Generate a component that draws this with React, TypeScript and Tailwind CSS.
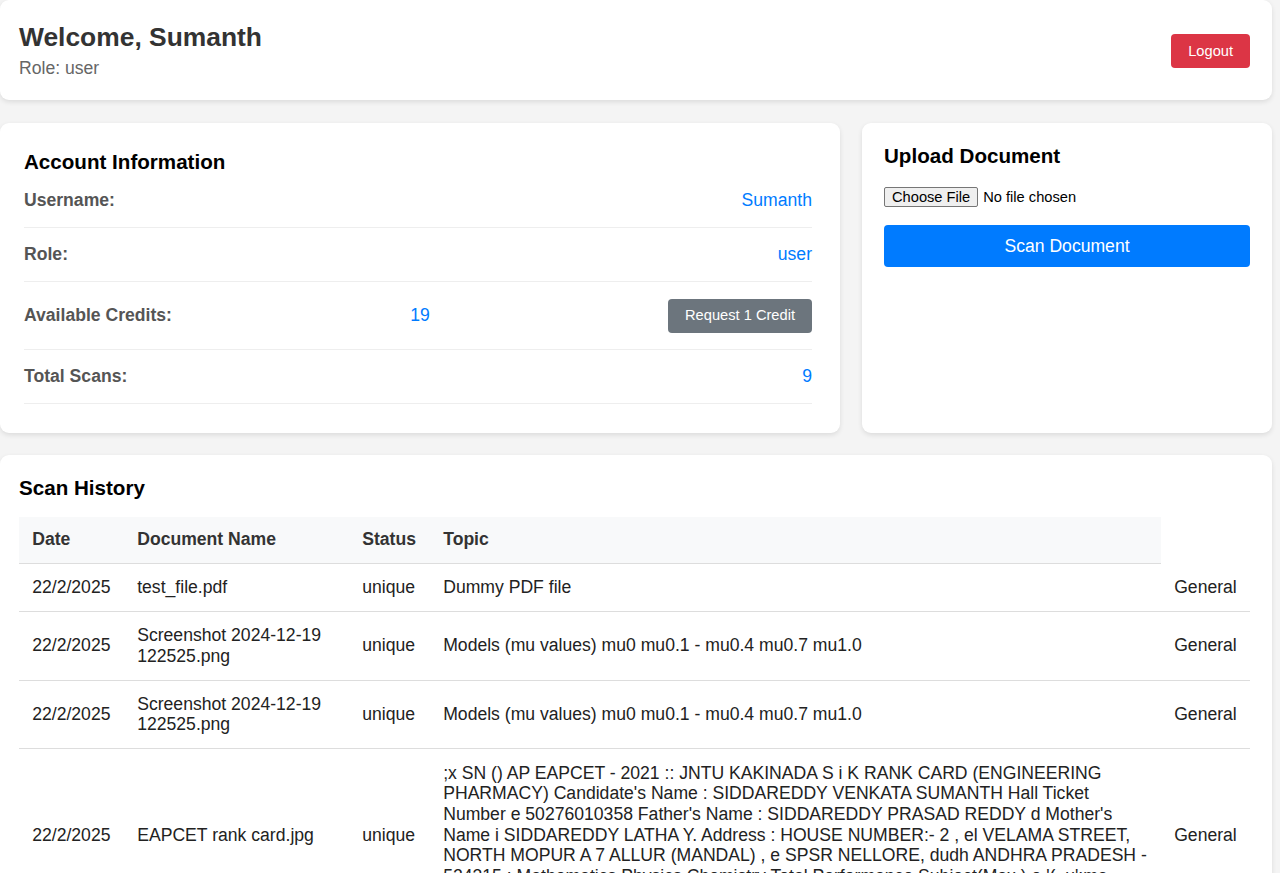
import React from "react";

const longText =
  ";x SN () AP EAPCET - 2021 :: JNTU KAKINADA S i K RANK CARD (ENGINEERING PHARMACY) Candidate's Name : SIDDAREDDY VENKATA SUMANTH Hall Ticket Number e 50276010358 Father's Name : SIDDAREDDY PRASAD REDDY d Mother's Name i SIDDAREDDY LATHA Y. Address : HOUSE NUMBER:- 2 , el VELAMA STREET, NORTH MOPUR A 7 ALLUR (MANDAL) , e SPSR NELLORE, dudh ANDHRA PRADESH - 524315 : Mathematics Physics Chemistry Total Performance Subject(Max.) e '(«u':ma Marks Secured 52.25 31.11 30.42 113.78 Rank 29457";

const rows = [
  { date: "22/2/2025", name: "test_file.pdf", status: "unique", topic: "Dummy PDF file", cat: "General" },
  { date: "22/2/2025", name: "Screenshot 2024-12-19 122525.png", status: "unique", topic: "Models (mu values) mu0 mu0.1 - mu0.4 mu0.7 mu1.0", cat: "General" },
  { date: "22/2/2025", name: "Screenshot 2024-12-19 122525.png", status: "unique", topic: "Models (mu values) mu0 mu0.1 - mu0.4 mu0.7 mu1.0", cat: "General" },
  { date: "22/2/2025", name: "EAPCET rank card.jpg", status: "unique", topic: longText, cat: "General" },
];

export default function App() {
  return (
    <div
      className="min-h-[873px] bg-[#f4f4f4] pr-[8px] text-[17.6px] text-[#333]"
      style={{ fontFamily: '"Liberation Sans", Arial, sans-serif' }}
    >
      {/* Header */}
      <div className="flex items-center justify-between rounded-[9px] bg-white pl-[19px] pr-[22px] pt-[22px] pb-[21px] shadow-[0_2px_5px_rgba(0,0,0,0.1)]">
        <div>
          <h1 className="text-[26.4px] font-bold leading-[30px] text-[#333]">Welcome, Sumanth</h1>
          <p className="mt-[6px] leading-[21px] text-[#666]">Role: user</p>
        </div>
        <button className="h-[34px] rounded-[4px] bg-[#dc3545] px-[17px] text-[14.67px] text-white">Logout</button>
      </div>

      {/* Middle row */}
      <div className="mt-[23px] flex gap-[22px]">
        <div className="w-[840px] h-[310px] rounded-[9px] bg-white pl-[24px] pr-[28px] pt-[27px] shadow-[0_2px_5px_rgba(0,0,0,0.1)]">
          <h3 className="text-[20.6px] font-bold leading-[24px] text-black">Account Information</h3>
          <div className="flex items-center justify-between border-b border-[#eee] py-[16px] leading-[21px]">
            <span className="font-bold text-[#555]">Username:</span>
            <span className="text-[#007bff]">Sumanth</span>
          </div>
          <div className="flex items-center justify-between border-b border-[#eee] py-[16px] leading-[21px]">
            <span className="font-bold text-[#555]">Role:</span>
            <span className="text-[#007bff]">user</span>
          </div>
          <div className="flex items-center justify-between border-b border-[#eee] py-[16.5px] leading-[21px]">
            <span className="font-bold text-[#555]">Available Credits:</span>
            <span className="text-[#007bff]">19</span>
            <button className="h-[34px] rounded-[4px] bg-[#6c757d] px-[17px] text-[14.67px] text-white">Request 1 Credit</button>
          </div>
          <div className="flex items-center justify-between border-b border-[#eee] py-[16px] leading-[21px]">
            <span className="font-bold text-[#555]">Total Scans:</span>
            <span className="text-[#007bff]">9</span>
          </div>
        </div>

        <div className="flex-1 h-[310px] rounded-[9px] bg-white px-[22px] pt-[21px] shadow-[0_2px_5px_rgba(0,0,0,0.1)]">
          <h3 className="text-[20.6px] font-bold leading-[24px] text-black">Upload Document</h3>
          <div className="mt-[18px] flex items-center text-[14.67px] text-black">
            <span className="flex h-[20px] items-center rounded-[2px] border border-[#767676] bg-[#efefef] px-[7px]">Choose File</span>
            <span className="ml-[5px]">No file chosen</span>
          </div>
          <button className="mt-[17px] h-[42px] w-full rounded-[4px] bg-[#007bff] text-[17.6px] text-white">Scan Document</button>
        </div>
      </div>

      {/* Scan History */}
      <div className="mt-[22px] rounded-[9px] bg-white pl-[19px] pr-[22px] pt-[21px] pb-[20px] shadow-[0_2px_5px_rgba(0,0,0,0.1)]">
        <h3 className="text-[20.6px] font-bold leading-[24px] text-black">Scan History</h3>
        <table className="mt-[17px] w-[1231px] table-fixed border-collapse">
          <colgroup>
            <col className="w-[105px]" />
            <col className="w-[225px]" />
            <col className="w-[81px]" />
            <col className="w-[731px]" />
            <col className="w-[89px]" />
          </colgroup>
          <thead>
            <tr>
              <th className="border-b border-[#ddd] bg-[#f8f9fa] px-[13.2px] pt-[12px] pb-[13px] text-left font-bold leading-[20.7px] text-[#333]">Date</th>
              <th className="border-b border-[#ddd] bg-[#f8f9fa] px-[13.2px] pt-[12px] pb-[13px] text-left font-bold leading-[20.7px] text-[#333]">Document Name</th>
              <th className="border-b border-[#ddd] bg-[#f8f9fa] px-[13.2px] pt-[12px] pb-[13px] text-left font-bold leading-[20.7px] text-[#333]">Status</th>
              <th className="border-b border-[#ddd] bg-[#f8f9fa] px-[13.2px] pt-[12px] pb-[13px] text-left font-bold leading-[20.7px] text-[#333]">Topic</th>
            </tr>
          </thead>
          <tbody>
            {rows.map((r, i) => (
              <tr key={i} className="text-[#222]">
                <td className="border-b border-[#ddd] px-[13.2px] py-[13.2px] align-middle leading-[20.7px]">{r.date}</td>
                <td className="border-b border-[#ddd] px-[13.2px] py-[13.2px] align-middle leading-[20.7px]">{r.name}</td>
                <td className="border-b border-[#ddd] px-[13.2px] py-[13.2px] align-middle leading-[20.7px]">{r.status}</td>
                <td className="border-b border-[#ddd] px-[13.2px] py-[13.2px] align-middle leading-[20.7px]">{r.topic}</td>
                <td className="border-b border-[#ddd] px-[13.2px] py-[13.2px] align-middle leading-[20.7px]">{r.cat}</td>
              </tr>
            ))}
          </tbody>
        </table>
      </div>
    </div>
  );
}
